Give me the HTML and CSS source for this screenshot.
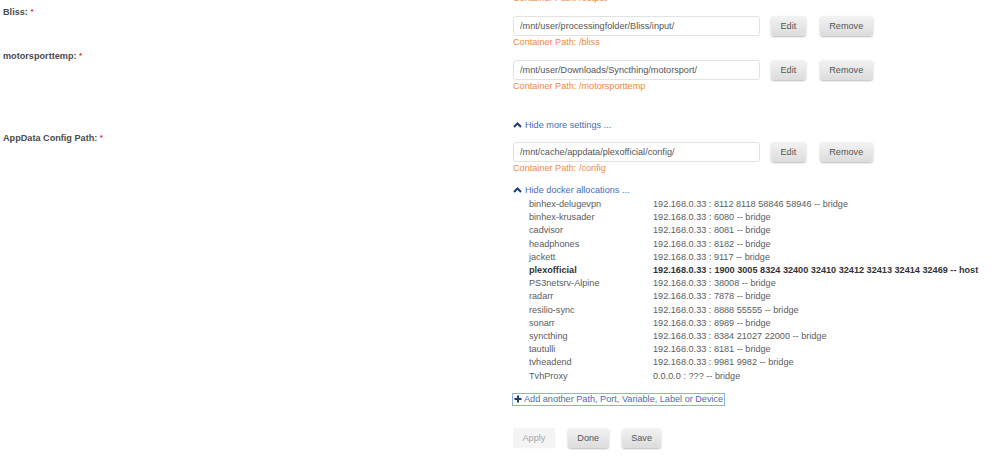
FILE: index.html
```html
<!DOCTYPE html>
<html lang="en">
<head>
    <meta charset="UTF-8">
    <meta name="viewport" content="width=device-width, initial-scale=1.0">
    <title>Update Container</title>
    <link rel="stylesheet" href="styles.css">
</head>
<body>

<div class="form">
    <div class="cut">
        <div class="container-path">Container Path: /output</div>
    </div>

    <div class="row">
        <div class="label">Bliss: <span class="req">*</span></div>
        <div class="value">
            <div class="path">
                <input type="text" class="textbox" value="/mnt/user/processingfolder/Bliss/input/">
                <button class="btn">Edit</button>
                <button class="btn">Remove</button>
            </div>
            <div class="container-path">Container Path: /bliss</div>
        </div>
    </div>

    <div class="row">
        <div class="label">motorsporttemp: <span class="req">*</span></div>
        <div class="value">
            <div class="path">
                <input type="text" class="textbox" value="/mnt/user/Downloads/Syncthing/motorsport/">
                <button class="btn">Edit</button>
                <button class="btn">Remove</button>
            </div>
            <div class="container-path">Container Path: /motorsporttemp</div>
        </div>
    </div>

    <div class="toggle more">
        <svg class="chevron" width="9" height="6" viewBox="0 0 9 6"><polyline points="1,5 4.5,1.5 8,5" fill="none" stroke="#1d3e72" stroke-width="2"/></svg>
        <a href="#">Hide more settings ...</a>
    </div>

    <div class="row">
        <div class="label">AppData Config Path: <span class="req">*</span></div>
        <div class="value">
            <div class="path">
                <input type="text" class="textbox" value="/mnt/cache/appdata/plexofficial/config/">
                <button class="btn">Edit</button>
                <button class="btn">Remove</button>
            </div>
            <div class="container-path">Container Path: /config</div>
        </div>
    </div>

    <div class="toggle docker">
        <svg class="chevron" width="9" height="6" viewBox="0 0 9 6"><polyline points="1,5 4.5,1.5 8,5" fill="none" stroke="#1d3e72" stroke-width="2"/></svg>
        <a href="#">Hide docker allocations ...</a>
    </div>

    <table class="allocations">
        <tr><td>binhex-delugevpn</td><td>192.168.0.33 : 8112 8118 58846 58946 -- bridge</td></tr>
        <tr><td>binhex-krusader</td><td>192.168.0.33 : 6080 -- bridge</td></tr>
        <tr><td>cadvisor</td><td>192.168.0.33 : 8081 -- bridge</td></tr>
        <tr><td>headphones</td><td>192.168.0.33 : 8182 -- bridge</td></tr>
        <tr><td>jackett</td><td>192.168.0.33 : 9117 -- bridge</td></tr>
        <tr class="current"><td>plexofficial</td><td>192.168.0.33 : 1900 3005 8324 32400 32410 32412 32413 32414 32469 -- host</td></tr>
        <tr><td>PS3netsrv-Alpine</td><td>192.168.0.33 : 38008 -- bridge</td></tr>
        <tr><td>radarr</td><td>192.168.0.33 : 7878 -- bridge</td></tr>
        <tr><td>resilio-sync</td><td>192.168.0.33 : 8888 55555 -- bridge</td></tr>
        <tr><td>sonarr</td><td>192.168.0.33 : 8989 -- bridge</td></tr>
        <tr><td>syncthing</td><td>192.168.0.33 : 8384 21027 22000 -- bridge</td></tr>
        <tr><td>tautulli</td><td>192.168.0.33 : 8181 -- bridge</td></tr>
        <tr><td>tvheadend</td><td>192.168.0.33 : 9981 9982 -- bridge</td></tr>
        <tr><td>TvhProxy</td><td>0.0.0.0 : ??? -- bridge</td></tr>
    </table>

    <div class="add">
        <a href="#" class="add-link">
            <svg class="plus" width="8" height="8" viewBox="0 0 8 8"><path d="M4 0.5V7.5M0.5 4H7.5" stroke="#1d3e72" stroke-width="2"/></svg>Add another Path, Port, Variable, Label or Device</a>
    </div>

    <div class="actions">
        <button class="btn" disabled>Apply</button>
        <button class="btn">Done</button>
        <button class="btn">Save</button>
    </div>
</div>

</body>
</html>
```

FILE: styles.css
```css
body {
    margin: 0;
    font-family: "Liberation Sans", Arial, sans-serif;
    font-size: 9.15px;
    color: #555;
    background: #fff;
}
.form {
    overflow: hidden;
    height: 463px;
}
.cut {
    margin-top: -8px;
    padding-left: 513px;
}
.row {
    display: flex;
    margin-bottom: 2px;
}
.cut + .row {
    margin-top: 2px;
}
.label {
    width: 510px;
    padding-left: 3px;
    line-height: 12px;
    font-weight: bold;
    color: #4a4a4a;
}
.req {
    color: #e0282c;
    font-size: 8px;
    vertical-align: 1px;
}
.value {
    padding-top: 10px;
}
.path {
    display: flex;
    align-items: center;
    height: 20px;
}
.textbox {
    box-sizing: border-box;
    width: 247px;
    height: 20px;
    padding: 0 6px;
    border: 1px solid #e2e2e2;
    border-radius: 3px;
    font-family: inherit;
    font-size: 9.15px;
    color: #555;
    background: #fff;
}
.btn {
    height: 20px;
    padding: 0 9.5px;
    border: none;
    border-radius: 3px;
    font-family: inherit;
    font-size: 9.15px;
    color: #555;
    background: linear-gradient(#f3f3f3, #dcdcdc);
    box-shadow: 0 1px 2px rgba(0, 0, 0, 0.28);
    cursor: pointer;
}
.btn:disabled {
    color: #a8a8a8;
    background: #f4f4f4;
    box-shadow: 0 0 1px rgba(0, 0, 0, 0.12);
    cursor: default;
}
.path .btn {
    margin-left: 11px;
}
.path .btn + .btn {
    margin-left: 14px;
}
.container-path {
    line-height: 12px;
    color: #ee8a3c;
}
.toggle {
    display: flex;
    align-items: center;
    padding-left: 513px;
    line-height: 12px;
}
.toggle.more {
    margin-top: 27px;
    margin-bottom: 1px;
}
.toggle.docker {
    margin-top: 10px;
}
.chevron {
    margin-right: 3px;
}
a {
    color: #486dba;
    text-decoration: none;
}
.allocations {
    margin-left: 529px;
    margin-top: 2px;
    border-collapse: collapse;
    color: #5c5c5c;
}
.allocations td {
    padding: 0;
    height: 13.2px;
    line-height: 13.2px;
    white-space: nowrap;
}
.allocations td:first-child {
    width: 124px;
}
.allocations .current td {
    font-weight: bold;
    color: #333;
}
.add {
    padding-left: 513px;
    margin-top: 11px;
    line-height: 11px;
}
.add-link {
    display: inline-flex;
    align-items: center;
    outline: 1px solid #8fb1e8;
    padding-right: 1px;
}
.plus {
    margin: 0 2px 0 1px;
}
.actions {
    display: flex;
    gap: 13px;
    padding-left: 513px;
    margin-top: 22px;
}
```
